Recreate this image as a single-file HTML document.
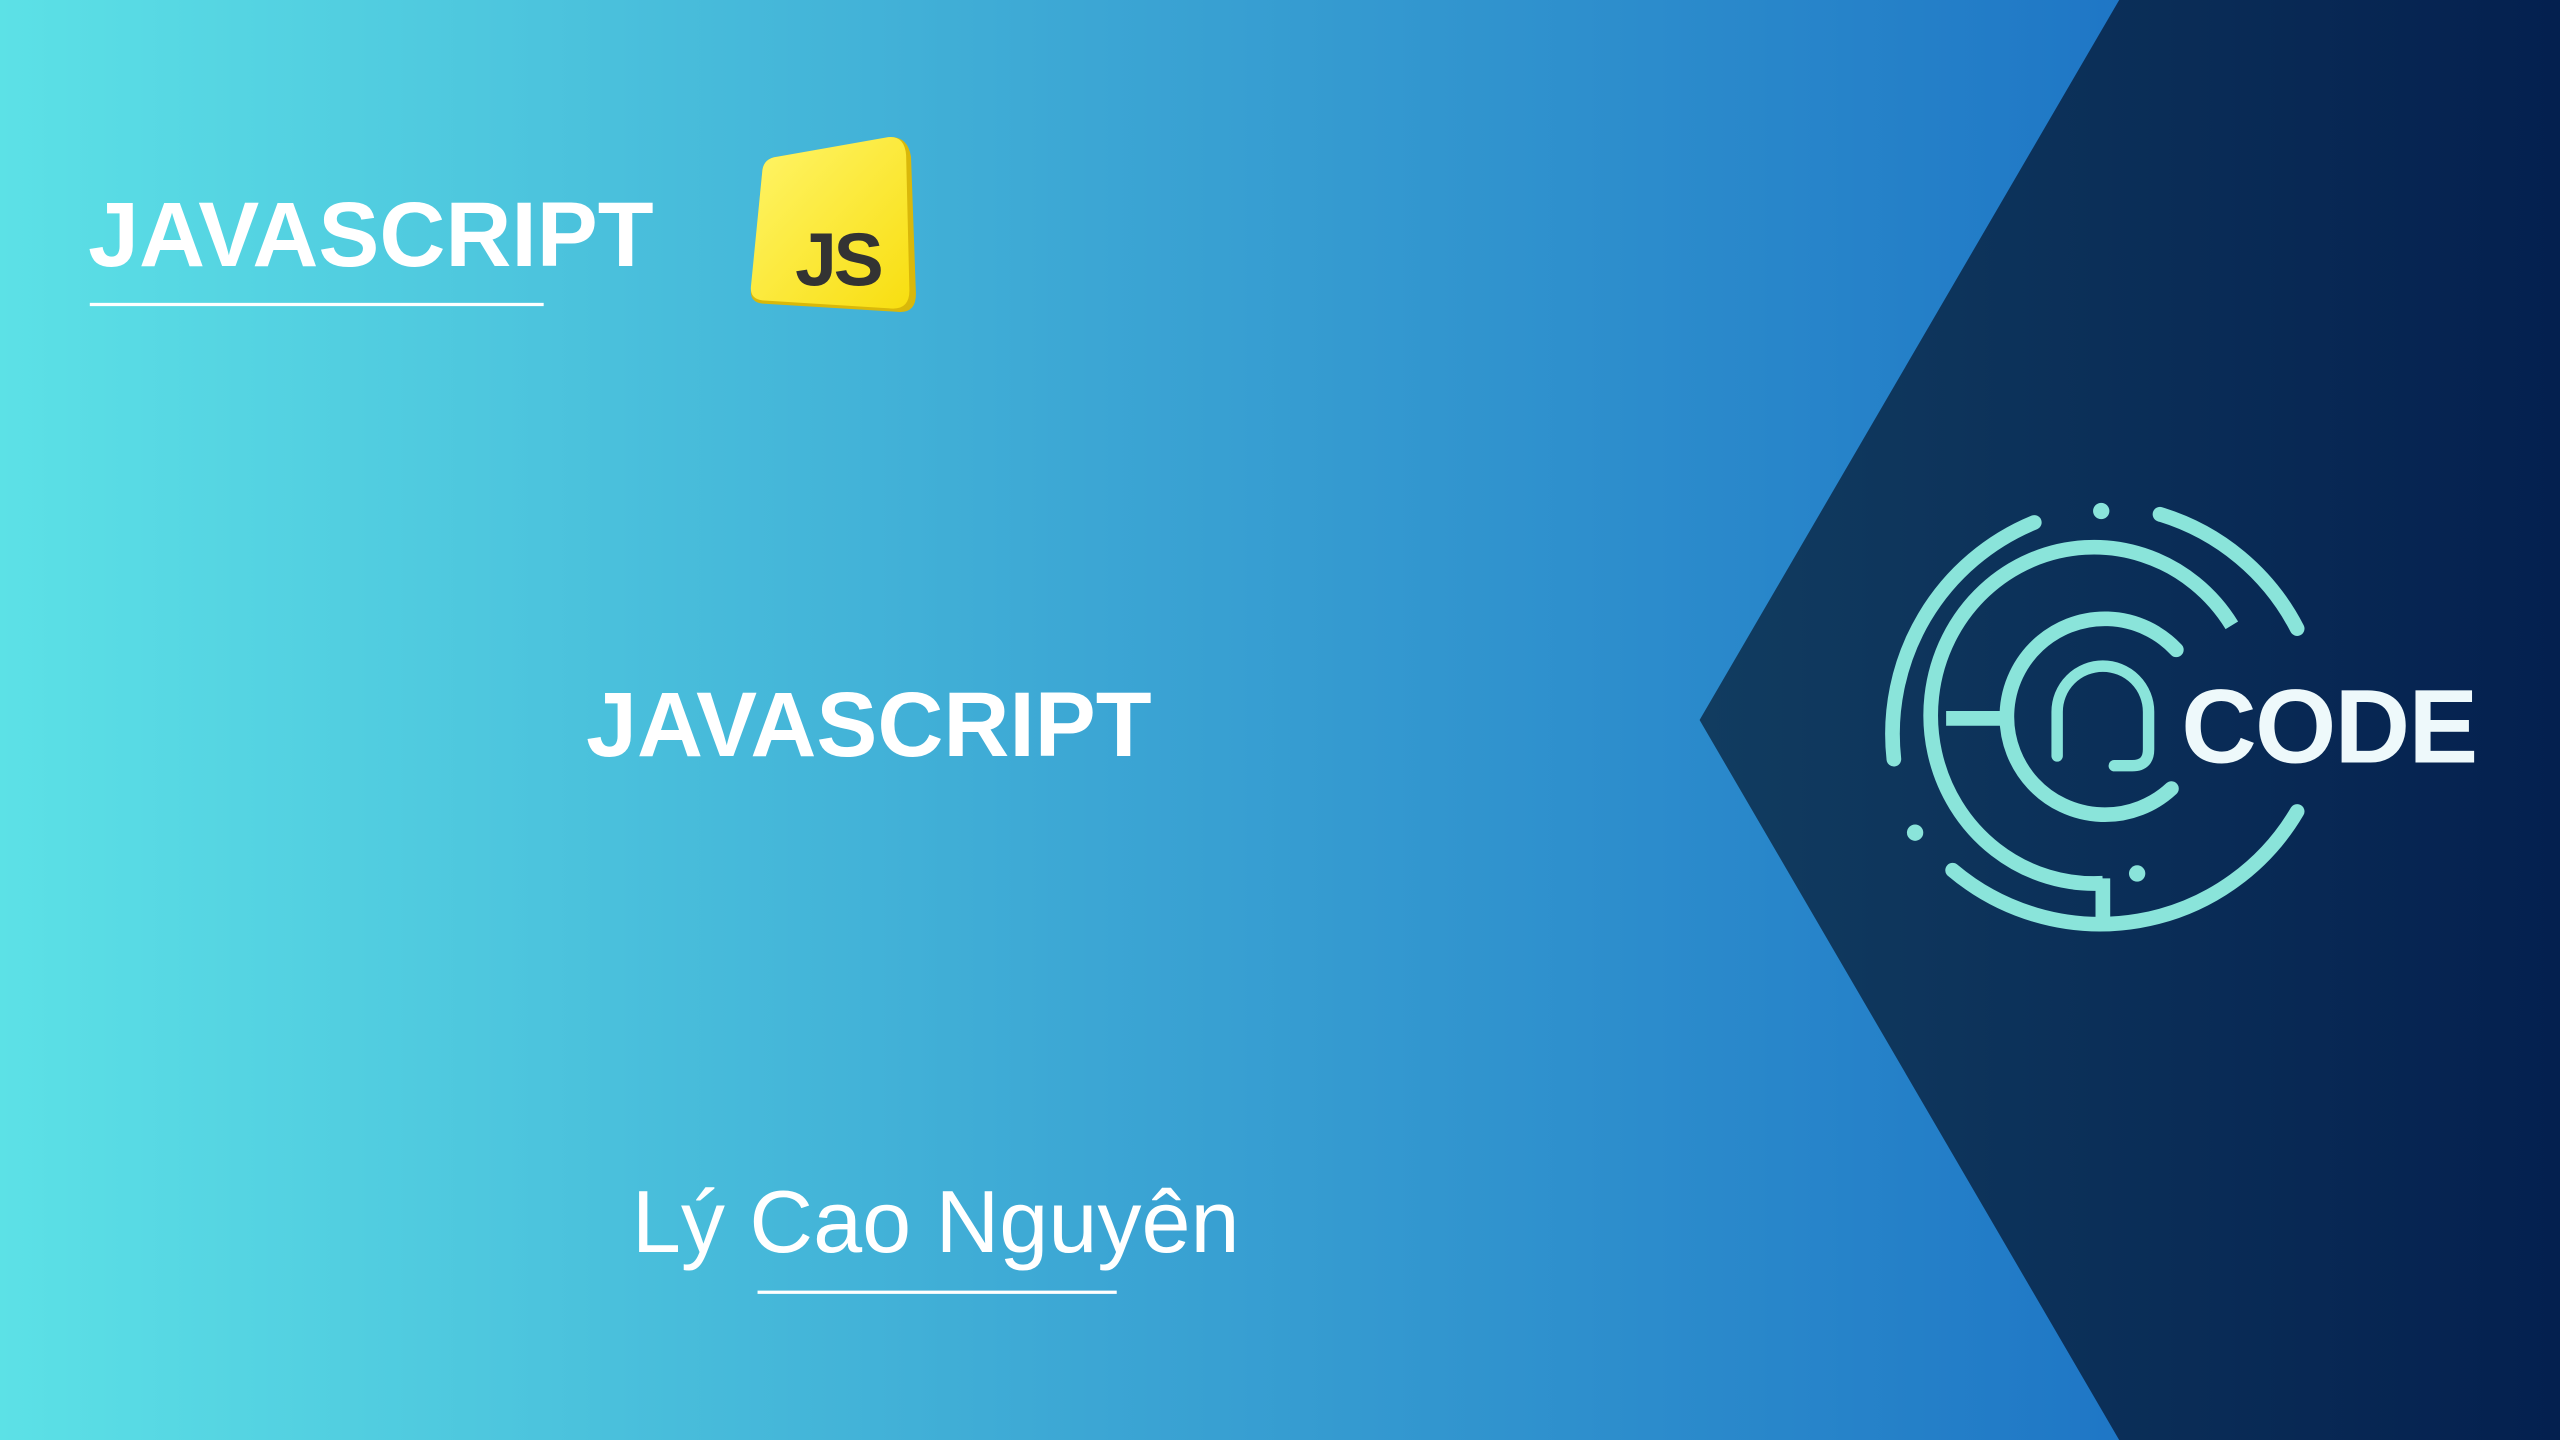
<!DOCTYPE html>
<html><head><meta charset="utf-8"><style>
html,body{margin:0;padding:0;width:2560px;height:1440px;overflow:hidden}
svg{display:block}
</style></head><body>
<svg width="2560" height="1440" viewBox="0 0 1568 882" xmlns="http://www.w3.org/2000/svg">
<defs>
<linearGradient id="bg" x1="0" y1="0" x2="1" y2="0">
<stop offset="0" stop-color="#5ce1e6"/>
<stop offset="0.45" stop-color="#3aa3d3"/>
<stop offset="1" stop-color="#1262bf"/>
</linearGradient>
<linearGradient id="dk" x1="0" y1="0" x2="1" y2="0">
<stop offset="0" stop-color="#113c60"/>
<stop offset="1" stop-color="#04204f"/>
</linearGradient>
<linearGradient id="yl" x1="0" y1="0" x2="1" y2="1">
<stop offset="0" stop-color="#fff56a"/>
<stop offset="1" stop-color="#f8de10"/>
</linearGradient>
</defs>
<rect width="1568" height="882" fill="url(#bg)"/>
<polygon points="1298,0 1568,0 1568,882 1298,882 1041,441" fill="url(#dk)"/>

<g font-family="Liberation Sans, sans-serif" fill="#fff">
<text x="54" y="163" font-size="56" font-weight="bold">JAVASCRIPT</text>
<rect x="55" y="185.5" width="278" height="2" fill="#fff"/>
<text x="359" y="463" font-size="56" font-weight="bold">JAVASCRIPT</text>
<text x="387" y="767" font-size="54" font-stretch="condensed">Lý Cao Nguyên</text>
<rect x="464" y="790.5" width="220" height="2" fill="#fff"/>
</g>

<!-- JS logo -->
<path d="M476,96 L546,84 Q556,84 558,96 L561,180 Q561,192 550,191 L467,186 Q459,185 460,177 L467,104 Q468,97 476,96 Z" fill="#d9b80a"/>
<path d="M476,96 L544,84 Q554,83 555,95 L557,178 Q557,189 547,189 L467,184 Q459,183 460,175 L467,104 Q468,97 476,96 Z" fill="url(#yl)"/>
<text x="487" y="175" font-family="Liberation Sans, sans-serif" font-weight="bold" font-size="46" fill="#333" letter-spacing="-2">JS</text>

<!-- CODE logo -->
<g fill="none" stroke="#8ae4da" stroke-width="9" stroke-linecap="round">
<path d="M1246,320 A140 140 0 0 0 1160,465"/>
<path d="M1323,315 A140 140 0 0 1 1407,385"/>
<path d="M1407,497 A140 140 0 0 1 1196,533"/>
<path d="M1367,383 A100 103 0 1 0 1288,541" stroke-linecap="butt"/>
<path d="M1288,538 L1288,566" stroke-linecap="butt"/>
<path d="M1192,440 L1228,440" stroke-linecap="butt"/>
<path d="M1333,398 A60 60 0 1 0 1330,483"/>
<path d="M1260,463 L1260,436 A28 28 0 0 1 1316,436 L1316,459 Q1316,469 1306,469 L1295,469" stroke-width="7"/>
</g>
<g fill="#8ae4da">
<circle cx="1287" cy="313" r="5"/>
<circle cx="1173" cy="510" r="5"/>
<circle cx="1309" cy="535" r="5"/>
</g>
<text x="1336" y="467" font-family="Liberation Sans, sans-serif" font-weight="bold" font-size="64" fill="#eef9fb" letter-spacing="-1">CODE</text>
</svg>
</body></html>
